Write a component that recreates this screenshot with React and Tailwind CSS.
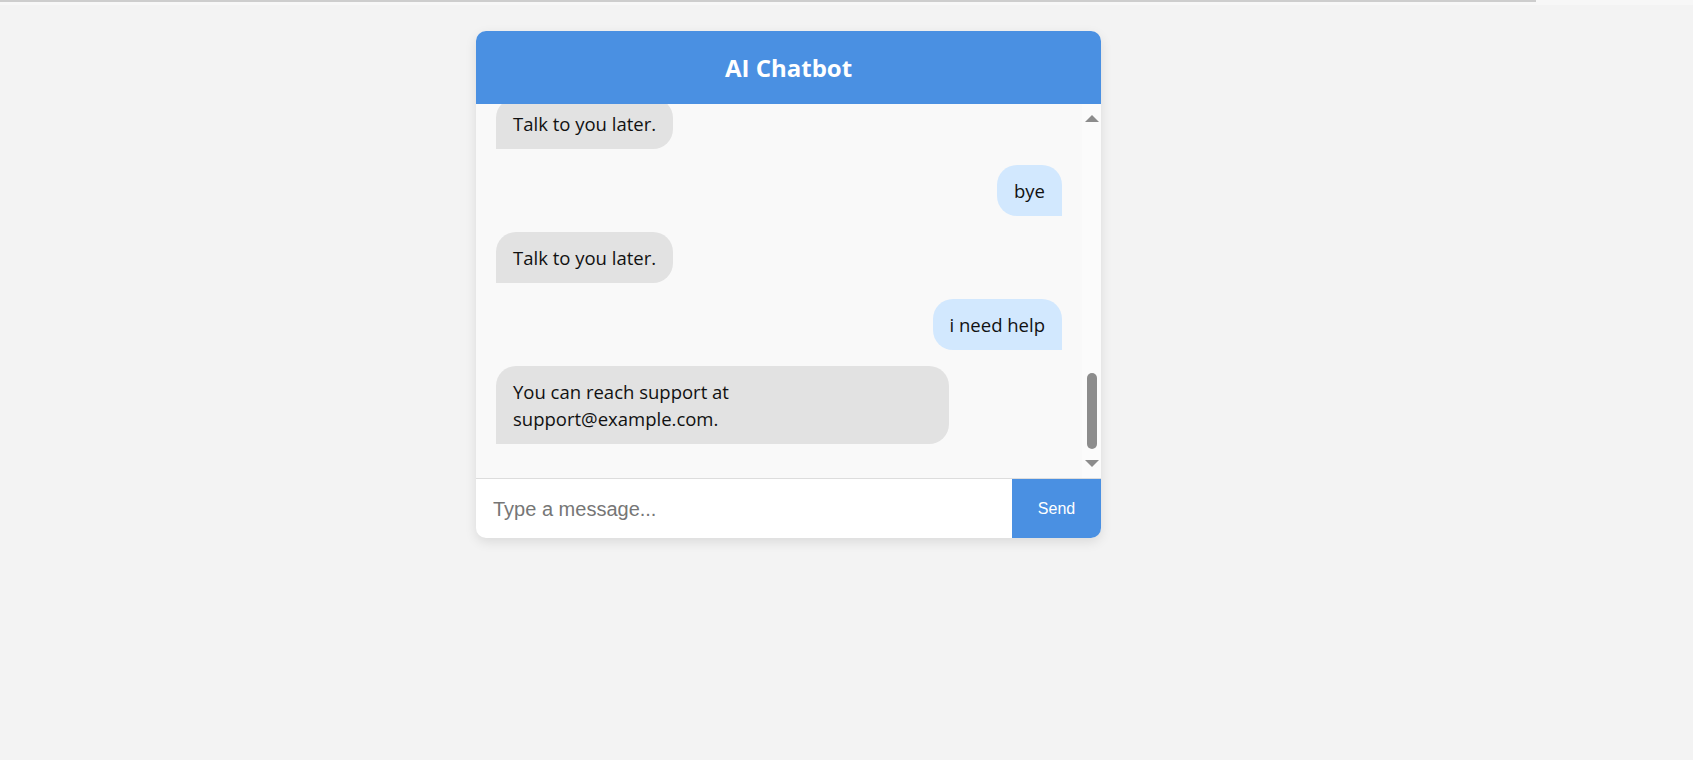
import React, { useEffect, useRef } from "react";

const messages = [
  { from: "bot", text: "Talk to you later." },
  { from: "user", text: "bye" },
  { from: "bot", text: "Talk to you later." },
  { from: "user", text: "i need help" },
  { from: "bot", text: "You can reach support at support@example.com." },
];

function Scrollbar() {
  return (
    <div className="w-[19px] shrink-0 bg-[#fbfbfb] flex flex-col items-center justify-between py-[11px]">
      <div className="w-0 h-0 border-l-[7px] border-r-[7px] border-b-[7px] border-l-transparent border-r-transparent border-b-[#8c8c8c]" />
      <div className="flex-1 w-full flex flex-col justify-end items-center pb-[11px]">
        <div className="w-[10px] h-[76px] rounded-full bg-[#8c8c8c]" />
      </div>
      <div className="w-0 h-0 border-l-[7px] border-r-[7px] border-t-[7px] border-l-transparent border-r-transparent border-t-[#8c8c8c]" />
    </div>
  );
}

export default function App() {
  const listRef = useRef(null);

  useEffect(() => {
    if (listRef.current) {
      listRef.current.scrollTop = listRef.current.scrollHeight;
    }
  }, []);

  return (
    <div className="min-h-[760px] w-full bg-[#f3f3f3] font-['Open_Sans',sans-serif]">
      <div className="h-[5px] w-full bg-[#f7f7f7]">
        <div className="h-[2px] w-[1536px] bg-[#cdcdcd]" />
      </div>

      <div className="flex justify-center pt-[26px] pr-[116px]">
        <div className="w-[625px] bg-white rounded-[10px] overflow-hidden shadow-[0_4px_12px_rgba(0,0,0,0.1)] flex flex-col">
          <div className="h-[73px] bg-[#4a90e2] flex items-center justify-center">
            <h2 className="text-white font-bold text-[24px]">AI Chatbot</h2>
          </div>

          <div className="flex h-[375px] bg-[#f9f9f9] border-b border-[#dddddd]">
            <div
              ref={listRef}
              className="flex-1 overflow-y-auto [scrollbar-width:none] px-[20px] pt-[20px] pb-[34px] flex flex-col gap-[16px]"
            >
              {messages.map((m, i) => (
                <div
                  key={i}
                  className={m.from === "user" ? "flex justify-end" : "flex justify-start"}
                >
                  <div
                    className={
                      m.from === "user"
                        ? "max-w-[80%] bg-[#d2e8fe] text-[#111] text-[18.5px] leading-[27px] px-[17px] py-[12px] rounded-t-[20px] rounded-bl-[20px]"
                        : "max-w-[80%] bg-[#e2e2e2] text-[#111] text-[18.5px] leading-[27px] px-[17px] py-[12px] rounded-t-[20px] rounded-br-[20px]"
                    }
                  >
                    {m.text}
                  </div>
                </div>
              ))}
            </div>
            <Scrollbar />
          </div>

          <div className="flex h-[59px]">
            <input
              type="text"
              placeholder="Type a message..."
              className="flex-1 px-[17px] text-[20px] font-['Liberation_Sans',Arial,sans-serif] outline-none placeholder:text-[#767676]"
            />
            <button className="w-[89px] bg-[#4a90e2] text-white text-[16px] font-['Liberation_Sans',Arial,sans-serif]">
              Send
            </button>
          </div>
        </div>
      </div>
    </div>
  );
}
